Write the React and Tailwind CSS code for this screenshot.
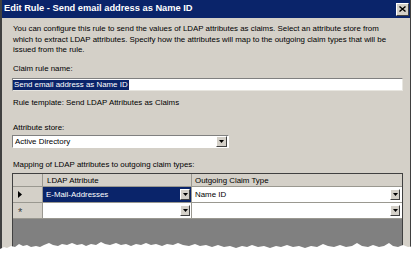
import React from 'react'

const font = { fontFamily: '"Liberation Sans", Arial, sans-serif' }

// jagged "torn paper" edge along the bottom of the screenshot
const TEAR = [
  [0, 249], [4, 247], [7, 248], [11, 246], [15, 247], [19, 244], [23, 246], [27, 245], [31, 247],
  [36, 246], [40, 247], [44, 245], [49, 243], [53, 245], [58, 246], [62, 244], [67, 245], [72, 243],
  [77, 245], [82, 244], [86, 246], [91, 244], [96, 245], [101, 242], [105, 244], [110, 245], [116, 243],
  [121, 245], [126, 244], [131, 246], [136, 244], [141, 245], [146, 243], [151, 245], [156, 244],
  [162, 246], [167, 244], [173, 245], [178, 243], [183, 245], [189, 246], [195, 244], [200, 246],
  [206, 245], [212, 247], [218, 245], [224, 247], [230, 246], [236, 248], [242, 246], [247, 247],
  [252, 245], [258, 247], [264, 246], [270, 248], [276, 246], [281, 247], [287, 245], [293, 247],
  [299, 246], [305, 248], [311, 246], [317, 247], [323, 244], [328, 246], [334, 247], [340, 245],
  [346, 247], [352, 246], [357, 243], [362, 246], [368, 247], [373, 245], [379, 247], [384, 246],
  [389, 243], [393, 246], [398, 247], [403, 245], [408, 247], [415, 246],
]
const tearPath = 'M0 255 ' + TEAR.map(([x, y]) => `L${x} ${y}`).join(' ') + ' L415 255 Z'

function DropButton({ className = '' }) {
  return (
    <div className={`flex items-center justify-center bg-[#d4d0c8] border border-t-white border-l-white border-r-[#404040] border-b-[#404040] ${className}`}>
      <svg width="5" height="3" viewBox="0 0 5 3"><path d="M0 0h5L2.5 3z" fill="#000" /></svg>
    </div>
  )
}

export default function App() {
  return (
    <div className="relative w-[415px] h-[255px] overflow-hidden bg-white text-[7.9px] text-black whitespace-nowrap" style={font}>
      <div className="w-[411px] h-[255px] bg-[#d4d0c8] border-l-2 border-r border-l-[#404040] border-r-[#404040] flex flex-col">
        {/* title bar */}
        <div className="h-[18px] shrink-0 bg-[#0a246a] flex items-center justify-between pl-[2px] pr-[1px]">
          <span className="text-white font-bold text-[9.3px]">Edit Rule - Send email address as Name ID</span>
          <div className="w-[13px] h-[13px] bg-[#d4d0c8] border border-t-white border-l-white border-r-[#404040] border-b-[#404040] flex items-center justify-center">
            <svg width="7" height="6" viewBox="0 0 7 6"><path d="M0.5 0.5l6 5M6.5 0.5l-6 5" stroke="#000" strokeWidth="1.4" /></svg>
          </div>
        </div>

        <div className="pl-[10px] pr-[7px] flex flex-col flex-1">
          <p className="mt-[6px] pl-[1px] leading-[10.5px]">
            You can configure this rule to send the values of LDAP attributes as claims. Select an attribute store from
            <br />which to extract LDAP attributes. Specify how the attributes will map to the outgoing claim types that will be
            <br />issued from the rule.
          </p>

          <p className="mt-[8.5px] pl-[1px] leading-[10px]">Claim rule name:</p>
          <div className="mt-[4px] h-[13px] bg-white border border-t-[#808080] border-l-[#808080] border-r-[#e8e6e0] border-b-[#e8e6e0] flex items-center px-[0px]">
            <span className="bg-[#0a246a] text-white leading-[10px] px-[1px]">Send email address as Name ID</span>
          </div>

          <p className="mt-[7px] pl-[1px] leading-[10px]">Rule template: Send LDAP Attributes as Claims</p>

          <p className="mt-[15px] pl-[1px] leading-[10px]">Attribute store:</p>
          <div className="mt-[2px] w-[217px] h-[13px] bg-white border border-t-[#808080] border-l-[#808080] border-r-white border-b-white flex items-center justify-between pl-[2px] pr-[1px]">
            <span className="leading-[10px]">Active Directory</span>
            <DropButton className="w-[11px] h-[11px]" />
          </div>

          <p className="mt-[12px] pl-[1px] leading-[10px]">Mapping of LDAP attributes to outgoing claim types:</p>

          {/* data grid */}
          <div className="mt-[3px] w-[391px] flex-1 border border-[#404040] bg-[#808080] flex flex-col">
            <div className="h-[13px] bg-[#d4d0c8] flex border-b border-[#9a9890]">
              <div className="w-[30px] border-r border-[#9a9890]" />
              <div className="w-[149px] border-r border-[#9a9890] pl-[4px] leading-[13px]">LDAP Attribute</div>
              <div className="flex-1 pl-[3px] leading-[13px]">Outgoing Claim Type</div>
            </div>
            <div className="h-[16px] flex border-b border-[#9a9890]">
              <div className="w-[30px] bg-[#d4d0c8] border-r border-[#9a9890] flex items-center pl-[5px]">
                <svg width="4" height="7" viewBox="0 0 4 7"><path d="M0 0l4 3.5L0 7z" fill="#000" /></svg>
              </div>
              <div className="w-[149px] bg-[#0a246a] border-r border-[#9a9890] flex items-center justify-between pl-[3px] pr-[1px]">
                <span className="text-white">E-Mail-Addresses</span>
                <DropButton className="w-[10px] h-[11px]" />
              </div>
              <div className="flex-1 bg-white flex items-center justify-between pl-[3px] pr-[2px]">
                <span>Name ID</span>
                <DropButton className="w-[10px] h-[11px]" />
              </div>
            </div>
            <div className="h-[16px] flex border-b border-[#9a9890]">
              <div className="w-[30px] bg-[#d4d0c8] border-r border-[#9a9890] flex items-center pl-[5px] pt-[3px] text-[11px] leading-none text-[#404040]">*</div>
              <div className="w-[149px] bg-white border-r border-[#9a9890] flex items-center justify-end pr-[1px]">
                <DropButton className="w-[10px] h-[11px]" />
              </div>
              <div className="flex-1 bg-white flex items-center justify-end pr-[2px]">
                <DropButton className="w-[10px] h-[11px]" />
              </div>
            </div>
          </div>
        </div>
      </div>

      {/* torn edge */}
      <svg className="absolute left-0 top-0" width="415" height="255" viewBox="0 0 415 255">
        <path d={tearPath} fill="#fff" />
      </svg>
    </div>
  )
}
